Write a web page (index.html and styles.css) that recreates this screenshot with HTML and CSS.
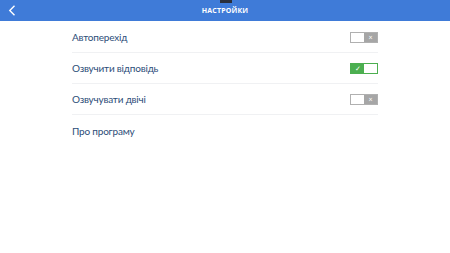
FILE: index.html
```html
<!DOCTYPE html>
<html lang="uk">

<head>
  <meta charset="UTF-8" />
  <meta name="viewport" content="width=device-width,initial-scale=1" />
  <title>Настройки</title>
  <link rel="stylesheet" href="styles.css">
</head>

<body>
  <header class="topbar">
    <span class="back">
      <svg width="8" height="11" viewBox="0 0 8 11"><path d="M6.5 0.8 L1.8 5.5 L6.5 10.2" fill="none" stroke="#fff" stroke-width="1.4" /></svg>
    </span>
    <h1>НАСТРОЙКИ</h1>
    <span class="notch"></span>
  </header>
  <ul class="settings">
    <li class="row">
      <span>Автоперехід</span>
      <span class="toggle"><span class="knob"></span><span class="mark">×</span></span>
    </li>
    <li class="row">
      <span>Озвучити відповідь</span>
      <span class="toggle on"><span class="mark">✓</span><span class="knob"></span></span>
    </li>
    <li class="row">
      <span>Озвучувати двічі</span>
      <span class="toggle"><span class="knob"></span><span class="mark">×</span></span>
    </li>
    <li class="row last">
      <span>Про програму</span>
    </li>
  </ul>
</body>

</html>
```

FILE: styles.css
```css
* {
  box-sizing: border-box;
  margin: 0;
  padding: 0;
}

body {
  font-family: Lato, "Open Sans", sans-serif;
  background: #fff;
  color: #2c4d78;
}

.topbar {
  height: 21px;
  background: #3f7bd8;
  display: flex;
  align-items: center;
  justify-content: center;
  position: relative;
}

.topbar h1 {
  color: #fff;
  font-family: "Open Sans", sans-serif;
  font-size: 7px;
  font-weight: 700;
  letter-spacing: 0.2px;
}

.back {
  position: absolute;
  left: 8px;
  top: 5px;
  display: flex;
}

.notch {
  position: absolute;
  left: 220px;
  top: 0;
  width: 12px;
  height: 3px;
  background: #2a2f3a;
}

.settings {
  list-style: none;
  margin: 1px 72px 0;
}

.row {
  height: 31px;
  display: flex;
  align-items: center;
  justify-content: space-between;
  font-size: 10px;
  letter-spacing: -0.2px;
  border-bottom: 1px solid #f0f1f3;
}

.row.last {
  border-bottom: none;
}

.toggle {
  width: 28px;
  height: 11px;
  display: flex;
  border: 1px solid #b0b0b0;
  background: #a6a6a6;
  letter-spacing: 0;
}

.toggle .knob {
  width: 13px;
  background: #fff;
}

.toggle .mark {
  flex: 1;
  color: #fff;
  font-size: 7px;
  line-height: 9px;
  text-align: center;
}

.toggle.on {
  border-color: #4caf50;
  background: #4caf50;
}
```
